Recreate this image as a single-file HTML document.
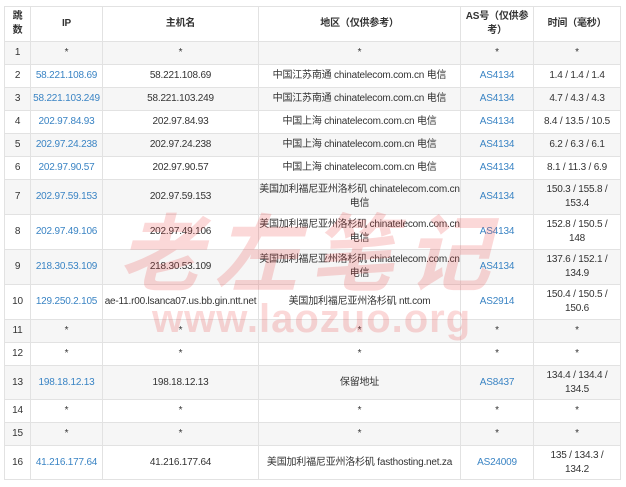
<!DOCTYPE html>
<html><head><meta charset="utf-8"><style>
body{margin:0;background:#fff;width:626px;height:487px;overflow:hidden;position:relative;font-family:"Liberation Sans","Noto Sans CJK SC",sans-serif;}
table{position:absolute;left:4px;top:6px;border-collapse:collapse;table-layout:fixed;width:616px;font-size:10px;color:#333;}
td,th{border:1px solid #e2e2e2;text-align:center;padding:0;line-height:14px;white-space:nowrap;overflow:hidden;letter-spacing:-0.2px;}
th{font-weight:bold;height:34px;}
td{height:22px;}
tr.t td{height:34px;}
tr.u td{height:33px;}
tbody tr:nth-child(odd){background:#f6f6f6;}
a{color:#3a84c4;text-decoration:none;}
.wm{position:absolute;color:rgba(235,60,60,0.2);font-weight:bold;font-style:italic;white-space:nowrap;pointer-events:none;}
</style></head><body>
<table>
<colgroup><col style="width:26px"><col style="width:72px"><col style="width:156px"><col style="width:202px"><col style="width:73px"><col style="width:87px"></colgroup>
<thead><tr><th>跳<br>数</th><th>IP</th><th>主机名</th><th>地区（仅供参考）</th><th>AS号（仅供参<br>考）</th><th>时间（毫秒）</th></tr></thead>
<tbody>
<tr><td>1</td><td>*</td><td>*</td><td>*</td><td>*</td><td>*</td></tr>
<tr><td>2</td><td><a>58.221.108.69</a></td><td>58.221.108.69</td><td>中国江苏南通 chinatelecom.com.cn 电信</td><td><a>AS4134</a></td><td>1.4 / 1.4 / 1.4</td></tr>
<tr><td>3</td><td><a>58.221.103.249</a></td><td>58.221.103.249</td><td>中国江苏南通 chinatelecom.com.cn 电信</td><td><a>AS4134</a></td><td>4.7 / 4.3 / 4.3</td></tr>
<tr><td>4</td><td><a>202.97.84.93</a></td><td>202.97.84.93</td><td>中国上海 chinatelecom.com.cn 电信</td><td><a>AS4134</a></td><td>8.4 / 13.5 / 10.5</td></tr>
<tr><td>5</td><td><a>202.97.24.238</a></td><td>202.97.24.238</td><td>中国上海 chinatelecom.com.cn 电信</td><td><a>AS4134</a></td><td>6.2 / 6.3 / 6.1</td></tr>
<tr><td>6</td><td><a>202.97.90.57</a></td><td>202.97.90.57</td><td>中国上海 chinatelecom.com.cn 电信</td><td><a>AS4134</a></td><td>8.1 / 11.3 / 6.9</td></tr>
<tr class="t"><td>7</td><td><a>202.97.59.153</a></td><td>202.97.59.153</td><td>美国加利福尼亚州洛杉矶 chinatelecom.com.cn<br>电信</td><td><a>AS4134</a></td><td>150.3 / 155.8 /<br>153.4</td></tr>
<tr class="t"><td>8</td><td><a>202.97.49.106</a></td><td>202.97.49.106</td><td>美国加利福尼亚州洛杉矶 chinatelecom.com.cn<br>电信</td><td><a>AS4134</a></td><td>152.8 / 150.5 /<br>148</td></tr>
<tr class="t"><td>9</td><td><a>218.30.53.109</a></td><td>218.30.53.109</td><td>美国加利福尼亚州洛杉矶 chinatelecom.com.cn<br>电信</td><td><a>AS4134</a></td><td>137.6 / 152.1 /<br>134.9</td></tr>
<tr class="t"><td>10</td><td><a>129.250.2.105</a></td><td>ae-11.r00.lsanca07.us.bb.gin.ntt.net</td><td>美国加利福尼亚州洛杉矶 ntt.com</td><td><a>AS2914</a></td><td>150.4 / 150.5 /<br>150.6</td></tr>
<tr><td>11</td><td>*</td><td>*</td><td>*</td><td>*</td><td>*</td></tr>
<tr><td>12</td><td>*</td><td>*</td><td>*</td><td>*</td><td>*</td></tr>
<tr class="u"><td>13</td><td><a>198.18.12.13</a></td><td>198.18.12.13</td><td>保留地址</td><td><a>AS8437</a></td><td>134.4 / 134.4 /<br>134.5</td></tr>
<tr><td>14</td><td>*</td><td>*</td><td>*</td><td>*</td><td>*</td></tr>
<tr><td>15</td><td>*</td><td>*</td><td>*</td><td>*</td><td>*</td></tr>
<tr class="u"><td>16</td><td><a>41.216.177.64</a></td><td>41.216.177.64</td><td>美国加利福尼亚州洛杉矶 fasthosting.net.za</td><td><a>AS24009</a></td><td>135 / 134.3 /<br>134.2</td></tr>
</tbody></table>
<div class="wm" style="left:118px;top:204px;font-size:84px;line-height:90px;letter-spacing:12px;font-family:'Noto Sans CJK SC',sans-serif;">老左笔记</div>
<div class="wm" style="left:152px;top:298px;font-size:40px;line-height:42px;letter-spacing:1px;font-style:normal;">www.laozuo.org</div>
</body></html>
